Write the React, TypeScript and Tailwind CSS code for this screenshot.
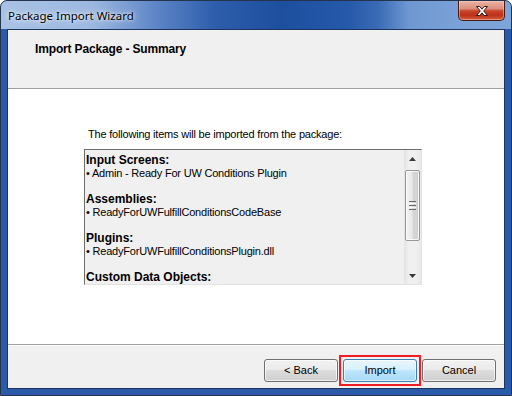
import React from "react";

function CloseButton() {
  return (
    <div className="mr-[6px] w-[47px] h-[20px] rounded-b-[5px] border border-t-0 border-[#4a1a12] bg-[linear-gradient(180deg,#e9b4a6_0%,#dc8f7c_40%,#c8452c_52%,#bc301a_75%,#d4603f_100%)] shadow-[inset_0_0_0_1px_rgba(255,210,200,0.45)] flex items-center justify-center">
      <svg width="16" height="12" viewBox="0 0 16 12">
        <path
          d="M2.5 1.5 L5.8 1.5 L8 4.2 L10.2 1.5 L13.5 1.5 L9.7 6 L13.5 10.5 L10.2 10.5 L8 7.8 L5.8 10.5 L2.5 10.5 L6.3 6 Z"
          fill="#ffffff"
          stroke="#3b1710"
          strokeWidth="1"
          strokeLinejoin="round"
        />
      </svg>
    </div>
  );
}

function WinButton({ label, focused }: { label: string; focused?: boolean }) {
  return (
    <div
      className={
        "w-[74px] h-[23px] rounded-[3px] border flex items-center justify-center text-[11px] text-black " +
        (focused
          ? "border-[#3c7fb1] bg-[linear-gradient(180deg,#eaf6fd_0%,#d9f0fc_45%,#bee6fd_50%,#a7d9f5_100%)] shadow-[inset_0_0_0_1px_rgba(255,255,255,0.6)]"
          : "border-[#707070] bg-[linear-gradient(180deg,#f2f2f2_0%,#ebebeb_45%,#dddddd_50%,#cfcfcf_100%)] shadow-[inset_0_0_0_1px_rgba(255,255,255,0.7)]")
      }
    >
      {label}
    </div>
  );
}

function Scrollbar() {
  return (
    <div className="w-[17px] h-full flex flex-col items-center bg-[linear-gradient(90deg,#e3e3e3_0%,#f0f0f0_30%,#f0f0f0_70%,#e8e8e8_100%)]">
      <div className="h-[17px] w-full flex items-center justify-center">
        <svg width="7" height="4" viewBox="0 0 7 4">
          <path d="M3.5 0 L7 4 L0 4 Z" fill="#3a3a3a" />
        </svg>
      </div>
      <div className="mt-[3px] w-[15px] h-[71px] rounded-[2px] border border-[#979797] bg-[linear-gradient(90deg,#f3f3f3_0%,#e8e8e8_45%,#d6d6d6_55%,#cfcfcf_100%)] shadow-[inset_0_0_0_1px_rgba(255,255,255,0.8)] flex flex-col items-center justify-center gap-[1px]">
        <div className="w-[7px] h-[1px] bg-[#6a6a6a]" />
        <div className="w-[7px] h-[1px] bg-[#f8f8f8]" />
        <div className="w-[7px] h-[1px] bg-[#6a6a6a]" />
        <div className="w-[7px] h-[1px] bg-[#f8f8f8]" />
        <div className="w-[7px] h-[1px] bg-[#6a6a6a]" />
      </div>
      <div className="flex-1" />
      <div className="h-[17px] w-full flex items-center justify-center">
        <svg width="7" height="4" viewBox="0 0 7 4">
          <path d="M0 0 L7 0 L3.5 4 Z" fill="#3a3a3a" />
        </svg>
      </div>
    </div>
  );
}

export default function App() {
  return (
    <div className="w-[512px] h-[396px] bg-white font-['Liberation_Sans',Arial,sans-serif]">
      <div className="w-[512px] h-[396px] flex flex-col rounded-t-[7px] border border-[#25344d] bg-[linear-gradient(90deg,#2b5aa8_0%,#2a5ba9_100%)] overflow-hidden">
        <div className="h-[28px] flex items-start justify-between bg-[linear-gradient(90deg,#a9c2e5_0%,#9cb8e0_18%,#5f87c8_30%,#2d5dab_42%,#1d4f9f_55%,#2559a9_68%,#3a6bb6_74%,#6f98d2_80%,#7aa2d8_90%,#7ea5d9_100%)]">
          <div className="pl-[7px] pt-[6px] text-[11.5px] text-black font-['Noto_Sans',sans-serif] [text-shadow:0_0_6px_rgba(255,255,255,0.9),0_0_3px_rgba(255,255,255,0.9)]">
            Package Import Wizard
          </div>
          <CloseButton />
        </div>
        <div className="mx-[6px] mb-[6px] flex-1 border border-[#1b3560] flex flex-col bg-[#f0f0f0]">
          <div className="h-[58px] pl-[27px] pt-[13px] bg-[#f0f0f0]">
            <div className="text-[12px] leading-[13px] font-bold text-black tracking-[-0.15px]">Import Package - Summary</div>
          </div>
          <div className="h-[1px] bg-[#a0a0a0]" />
          <div className="h-[1px] bg-white" />
          <div className="h-[254px] bg-white pl-[76px] pt-[38px]">
            <div className="pl-[4px] text-[11px] leading-[13px] text-black tracking-[-0.2px]">
              The following items will be imported from the package:
            </div>
            <div className="mt-[8px] w-[338px] h-[136px] border border-t-[#6d6d6d] border-l-[#6d6d6d] border-r-[#e3e3e3] border-b-[#e3e3e3] bg-[#f0f0f0] flex">
              <div className="flex-1 pl-[1px] pt-[4px] text-[11px] leading-[13px] text-black overflow-hidden tracking-[-0.2px]">
                <div className="font-bold text-[12px] tracking-[0px]">Input Screens:</div>
                <div>• Admin - Ready For UW Conditions Plugin</div>
                <div className="h-[13px]" />
                <div className="font-bold text-[12px] tracking-[0px]">Assemblies:</div>
                <div>• ReadyForUWFulfillConditionsCodeBase</div>
                <div className="h-[13px]" />
                <div className="font-bold text-[12px] tracking-[0px]">Plugins:</div>
                <div>• ReadyForUWFulfillConditionsPlugin.dll</div>
                <div className="h-[13px]" />
                <div className="font-bold text-[12px] tracking-[0px]">Custom Data Objects:</div>
              </div>
              <Scrollbar />
            </div>
          </div>
          <div className="h-[1px] bg-[#a0a0a0]" />
          <div className="h-[1px] bg-white" />
          <div className="flex-1 flex items-start justify-end pr-[8px] pt-[9px] bg-[#f0f0f0]">
            <div className="mt-[4px]">
              <WinButton label="< Back" />
            </div>
            <div className="ml-[1px] border-2 border-[#ee1c24] p-[2px]">
              <WinButton label="Import" focused />
            </div>
            <div className="ml-[1px] mt-[4px]">
              <WinButton label="Cancel" />
            </div>
          </div>
        </div>
      </div>
    </div>
  );
}
